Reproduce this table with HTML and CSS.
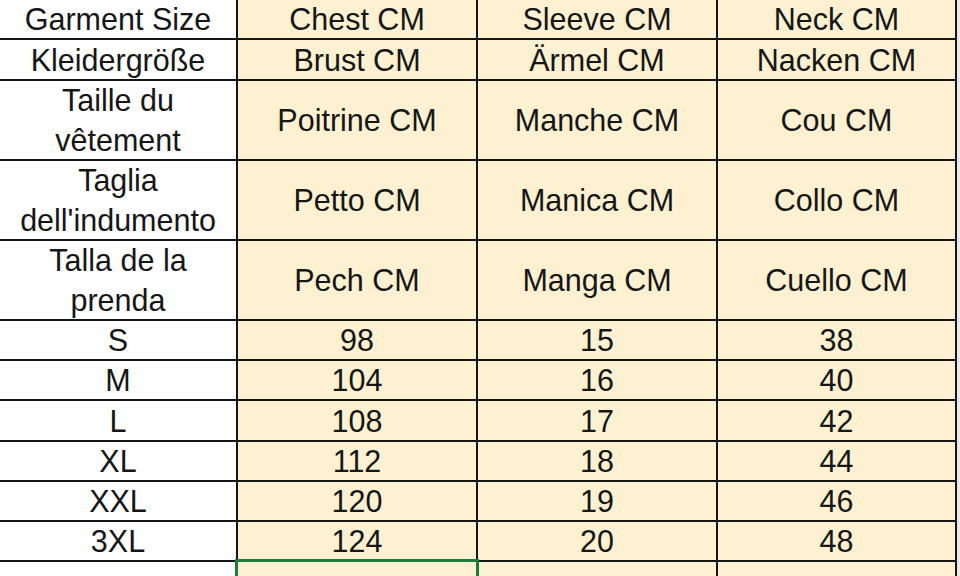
FILE: index.html
```html
<!DOCTYPE html>
<html lang="en">
<head>
<meta charset="utf-8">
<title>Garment Size Chart</title>
<link rel="stylesheet" href="styles.css">
</head>
<body>
<div class="sheet">
  <div class="grid">
    <div class="cell label r1">Garment Size</div>
    <div class="cell r1">Chest CM</div>
    <div class="cell r1">Sleeve CM</div>
    <div class="cell r1">Neck CM</div>

    <div class="cell label">Kleidergröße</div>
    <div class="cell">Brust CM</div>
    <div class="cell">Ärmel CM</div>
    <div class="cell">Nacken CM</div>

    <div class="cell label">Taille du<br>vêtement</div>
    <div class="cell">Poitrine CM</div>
    <div class="cell">Manche CM</div>
    <div class="cell">Cou CM</div>

    <div class="cell label">Taglia<br>dell'indumento</div>
    <div class="cell">Petto CM</div>
    <div class="cell">Manica CM</div>
    <div class="cell">Collo CM</div>

    <div class="cell label">Talla de la<br>prenda</div>
    <div class="cell">Pech CM</div>
    <div class="cell">Manga CM</div>
    <div class="cell">Cuello CM</div>

    <div class="cell label">S</div>
    <div class="cell">98</div>
    <div class="cell">15</div>
    <div class="cell">38</div>

    <div class="cell label">M</div>
    <div class="cell">104</div>
    <div class="cell">16</div>
    <div class="cell">40</div>

    <div class="cell label">L</div>
    <div class="cell">108</div>
    <div class="cell">17</div>
    <div class="cell">42</div>

    <div class="cell label">XL</div>
    <div class="cell">112</div>
    <div class="cell">18</div>
    <div class="cell">44</div>

    <div class="cell label">XXL</div>
    <div class="cell">120</div>
    <div class="cell">19</div>
    <div class="cell">46</div>

    <div class="cell label">3XL</div>
    <div class="cell">124</div>
    <div class="cell">20</div>
    <div class="cell">48</div>

    <div class="cell label"></div>
    <div class="cell selected"></div>
    <div class="cell"></div>
    <div class="cell"></div>
  </div>
</div>
</body>
</html>
```

FILE: styles.css
```css
html, body {
  margin: 0;
  padding: 0;
  background: #ebe9f0;
  overflow: hidden;
}

.sheet {
  width: 960px;
  height: 576px;
  overflow: hidden;
}

.grid {
  display: grid;
  grid-template-columns: 236px 238px 238px 237px;
  grid-template-rows: 38px 39px 78px 78px 78px 38px 38px 39px 38px 38px 38px 40px;
  gap: 2px;
  background: #141414;
  width: max-content;
  padding: 0 2px 0 0;
  margin: 0;
}

.cell {
  background: #fdf1d1;
  color: #161616;
  font-family: "Liberation Sans", Arial, sans-serif;
  font-size: 30.5px;
  line-height: 40px;
  display: flex;
  align-items: center;
  justify-content: center;
  text-align: center;
  white-space: nowrap;
}

.cell.label {
  background: #ffffff;
}

.cell.selected {
  outline: 3px solid #1f7a3f;
  outline-offset: 0;
  position: relative;
  z-index: 1;
}
```
